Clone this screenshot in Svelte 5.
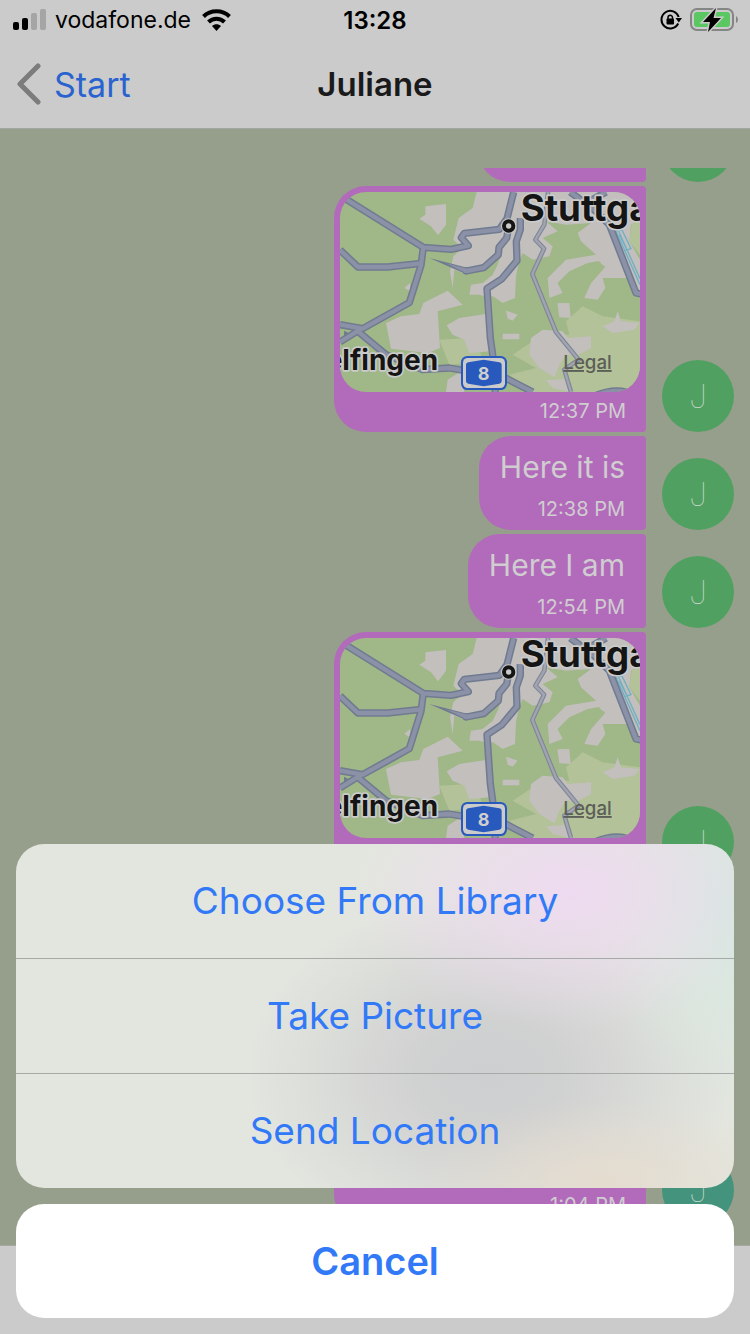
<script>
  const messages = [
    { kind: 'empty' },
    { kind: 'map', time: '12:37 PM' },
    { kind: 'text', text: 'Here it is', time: '12:38 PM' },
    { kind: 'text', text: 'Here I am', time: '12:54 PM' },
    { kind: 'map' },
    { kind: 'empty' },
    { kind: 'photo', time: '1:04 PM', teal: true }
  ];
  const actions = ['Choose From Library', 'Take Picture', 'Send Location'];
</script>

{#snippet map()}
  <svg class="map" viewBox="12 12 900 600">
    <rect x="12" y="12" width="900" height="600" fill="#a0b788" />
    <!-- light meadows -->
    <g fill="#b3c298">
      <path d="M740 355 L800 385 L912 400 V612 H640 L560 590 L520 560 L600 540 L530 500 L560 480 L620 440 L700 440 L690 400Z" />
      <path d="M890 90 L912 80 V200 L880 160Z" />
      <path d="M310 455 L400 450 L430 480 L440 520 L340 530Z" />
      <path d="M560 570 L640 590 L650 612 L560 612Z" />
    </g>
    <!-- built-up areas -->
    <g fill="#c2bfbd">
      <path d="M422 12 H912 V90 L885 110 L880 160 L912 215 V320 L890 270 L800 270 L808 300 L785 335 L745 330 L765 285 L805 240 L790 220 L755 225 L700 250 L665 285 L680 315 L640 330 L635 270 L690 215 L780 200 L735 160 L725 135 L765 105 L690 110 L630 100 L665 130 L620 150 L650 175 L640 205 L590 215 L560 195 L548 225 L540 265 L537 330 L500 345 L465 320 L480 325 L445 325 L430 320 L400 320 L405 290 L440 285 L470 260 L485 230 L498 190 L470 222 L440 248 L390 258 L355 245 L350 300 L342 250 L352 205 L380 180 L362 165 L352 155 L368 90 L410 60Z" />
      <path d="M268 55 L330 48 L330 110 L306 142 L285 115 L250 92 L268 80Z" />
      <path d="M150 405 L195 385 L250 378 L262 345 L335 308 L380 350 L305 370 L312 480 L275 495 L165 482Z" />
      <path d="M332 412 L370 390 L450 378 L462 490 L400 495 L385 455 L350 440Z" />
      <path d="M510 368 L545 380 L530 398 L515 392Z" />
      <path d="M500 437 H550 V454 H500Z" />
      <path d="M664 346 L700 345 L704 390 L670 388Z" />
      <path d="M585 450 L620 425 L680 430 L695 450 L765 445 L765 480 L720 505 L690 500 L670 530 L655 568 L610 540 L580 500Z" />
      <path d="M800 415 L835 400 L845 370 L855 400 L910 405 L895 425 L830 435Z" />
      <path d="M335 575 L375 550 L385 612 L330 612Z" />
      <path d="M630 577 L700 572 L702 612 L650 600Z" />
      <path d="M222 285 L205 300 L222 310Z" />
    </g>
    <g fill="#a0b788">
      <path d="M690 275 L730 240 L780 220 L808 235 L765 285 L745 310 L700 325Z" />
    </g>
    <!-- river -->
    <g fill="none" stroke="#6fb0c4" stroke-width="4">
      <path d="M838 125 L912 290 M846 125 L912 272 M840 128 L858 126 L885 182 L866 188 M850 140 L872 184" />
    </g>
    <!-- minor road -->
    <g fill="none" stroke-linejoin="round">
      <path d="M636 12 L625 110 L598 155 L624 182 L589 258 L660 432 L728 515 L685 545 L705 612" stroke="#7f8799" stroke-width="14" />
      <path d="M636 12 L625 110 L598 155 L624 182 L589 258 L660 432 L728 515 L685 545 L705 612" stroke="#a2a5b0" stroke-width="7" />
    </g>
    <!-- motorways: dark casing under a lighter core -->
    <path d="M280 210 L394 239 L389 258Z" fill="#707b90" />
    {#each [['#707b90', 22], ['#8b91a7', 13]] as [color, width]}
      <g fill="none" stroke={color} stroke-width={width} stroke-linejoin="round">
        <path d="M12 22 L262 178 L345 184 L397 173 L376 149 L385 136 L490 124 L513 92 L533 12" />
        <path d="M12 186 L66 237 L155 237 L256 226" />
        <path d="M262 178 L255 232 L220 344 L80 422 L12 410 M80 420 L12 462 M66 430 L150 500 L260 545 L340 540 L400 550 L470 550 L590 612" />
        <path d="M518 118 L512 150 L489 178 L487 200 L443 239 L391 249 L385 247" />
        <path d="M553 90 L553 125 L541 160 L543 218 L497 273 L453 302 L463 450 L470 500 L478 612" />
        <path d="M703 12 L780 70 L820 110 L900 315 L916 318" />
        <path d="M760 40 L810 12" />
        <path d="M780 622 Q830 602 870 612" />
      </g>
    {/each}
    <path d="M330 226 L393 242 L390 255Z" fill="#8b91a7" />
    <path d="M24 428 L40 436 L24 446Z" fill="#707b90" />
    <circle cx="518" cy="114" r="23" fill="#c9c9c9" />
    <circle cx="518" cy="114" r="14" fill="#c9c9c9" stroke="#151515" stroke-width="12" />
    <g class="place">
      <text x="554" y="98" font-size="110">Stuttgart</text>
      <text x="-31" y="546" font-size="84">elfingen</text>
    </g>
    <rect x="375" y="504" width="138" height="102" rx="19" fill="#2859bd" />
    <rect x="381" y="510" width="126" height="90" rx="14" fill="#cbcbcb" />
    <path d="M390 530 Q390 524 397 523 L443 515 L490 523 Q497 524 497 530 V580 Q497 586 490 587 L443 595 L397 587 Q390 586 390 580Z" fill="#2859bd" />
    <text class="shield" x="443" y="575">8</text>
    <text class="legal" x="682" y="543">Legal</text>
  </svg>
{/snippet}

<div class="screen">
  <header>
    <div class="status">
      <div class="carrier">
        <svg width="34" height="24" viewBox="0 0 34 24">
          <rect x="1" y="14" width="6" height="8" rx="2" />
          <rect x="10" y="10" width="6" height="12" rx="2" />
          <rect x="19" y="5" width="6" height="17" rx="2" fill="#a5a5a5" />
          <rect x="28" y="1" width="6" height="21" rx="2" fill="#a5a5a5" />
        </svg>
        <span>vodafone.de</span>
        <svg width="32" height="24" viewBox="-1 0 31 24" fill="none" stroke="#000" stroke-width="4">
          <path d="M2 8.500 C9 1.500 21 1.500 28 8.500" />
          <path d="M7 14 C11.500 9.500 18.500 9.500 23 14" />
          <path d="M10.500 18 C13 15.500 17 15.500 19.500 18 L15 23Z" fill="#000" stroke="none" />
        </svg>
      </div>
      <time>13:28</time>
      <div class="indicators">
        <svg width="22" height="22" viewBox="0 0 22 22">
          <path d="M18.200 14.500 A8.800 8.800 0 1 1 18.700 8" fill="none" stroke="#000" stroke-width="2" />
          <path d="M15.500 9 H22 L18.800 13.500Z" />
          <rect x="6.500" y="9.500" width="7.500" height="6" rx="1" />
          <path d="M8 10 V8.500 A2.200 2.200 0 0 1 12.500 8.500 V10" fill="none" stroke="#000" stroke-width="1.500" />
        </svg>
        <svg width="48" height="26" viewBox="0 0 48 26">
          <rect x="1" y="2" width="42" height="21" rx="6" fill="none" stroke="#858585" stroke-width="2" />
          <rect x="4" y="5" width="36" height="15" rx="3" fill="#5bc763" />
          <path d="M46 9 Q48 10 48 12.500 Q48 15 46 16Z" fill="#858585" />
          <path d="M26 1 L13 15 H20 L18 25 L31 11 H23.500Z" stroke="#cbcbcb" stroke-width="3" />
          <path d="M26 1 L13 15 H20 L18 25 L31 11 H23.500Z" />
        </svg>
      </div>
    </div>
    <nav>
      <button class="back">
        <svg width="26" height="42" viewBox="0 0 26 42" fill="none" stroke="#7c7c7c" stroke-width="5" stroke-linecap="round" stroke-linejoin="round">
          <path d="M22 3 L4 21 L22 39" />
        </svg>
        Start
      </button>
      <h1>Juliane</h1>
    </nav>
  </header>

  <main>
    {#each messages as m}
      <div class="row">
        <div class="bubble {m.kind}">
          {#if m.kind === 'map'}{@render map()}{/if}
          {#if m.kind === 'photo'}<div class="picture"></div>{/if}
          {#if m.text}<p>{m.text}</p>{/if}
          {#if m.time}<time>{m.time}</time>{/if}
        </div>
        <div class="avatar" class:teal={m.teal}>J</div>
      </div>
    {/each}
  </main>
  <footer></footer>

  <div class="sheet">
    <div class="actions">
      {#each actions as action}
        <button>{action}</button>
      {/each}
    </div>
    <button class="cancel">Cancel</button>
  </div>
</div>

<style>
  :global(body) {
    margin: 0;
  }
  .screen {
    position: relative;
    display: flex;
    flex-direction: column;
    height: 100vh;
    overflow: hidden;
    background: #969f8b;
    font-family: Inter, 'Liberation Sans', sans-serif;
  }
  svg {
    display: block;
    flex: none;
  }
  button {
    border: 0;
    padding: 0;
    background: none;
    font: inherit;
    cursor: pointer;
  }
  header {
    background: #cbcbcb;
    border-bottom: 1px solid #a2a6a0;
  }
  .status,
  nav {
    display: grid;
    grid-template-columns: 1fr auto 1fr;
    align-items: center;
  }
  .status {
    height: 40px;
    padding: 0 12px;
    font-size: 23px;
  }
  .status time {
    font-size: 24px;
    font-weight: 600;
  }
  .carrier {
    display: flex;
    align-items: center;
    gap: 9px;
  }
  .indicators {
    display: flex;
    align-items: center;
    justify-content: flex-end;
    gap: 8px;
  }
  nav {
    height: 88px;
    padding: 0 16px;
    font-size: 34px;
  }
  .back {
    display: flex;
    align-items: center;
    gap: 12px;
    color: #2863cf;
  }
  h1 {
    margin: 0;
    color: #1a1a1b;
    font-size: 33px;
    font-weight: 600;
  }
  main {
    flex: 1;
    min-height: 0;
    display: flex;
    flex-direction: column;
    justify-content: flex-end;
    gap: 4px;
    margin-top: 39px;
    padding: 0 16px 19px;
    overflow: hidden;
  }
  .row {
    flex: none;
    display: flex;
    align-items: flex-end;
    justify-content: flex-end;
    gap: 16px;
  }
  .bubble {
    box-sizing: border-box;
    display: flex;
    flex-direction: column;
    justify-content: space-between;
    min-height: 94px;
    padding: 11px 21px 9px;
    border-radius: 32px 4px 4px 32px;
    background: #b26abb;
    color: #d0cdd0;
    text-align: right;
  }
  .bubble.map,
  .bubble.photo {
    width: 312px;
    min-height: 246px;
    padding: 6px 6px 9px;
  }
  .map time,
  .photo time {
    padding-right: 14px;
  }
  .bubble.empty {
    width: 168px;
  }
  .bubble p {
    margin: 0;
    font-size: 30px;
    line-height: 40px;
  }
  .bubble time {
    font-size: 20px;
    line-height: 24px;
  }
  svg.map {
    width: 100%;
    border-radius: 26px;
  }
  .picture {
    height: 200px;
    border-radius: 26px;
    background: #7d8287;
  }
  .place {
    fill: #151515;
    stroke: #cbcbcb;
    stroke-width: 10px;
    stroke-linejoin: round;
    paint-order: stroke;
    font-weight: 700;
  }
  .shield {
    fill: #cfcfcf;
    font-size: 54px;
    font-weight: 700;
    text-anchor: middle;
  }
  .legal {
    fill: #5c5e58;
    font-size: 56px;
    font-weight: 500;
    text-decoration: underline;
  }
  .avatar {
    display: grid;
    place-items: center;
    width: 72px;
    height: 72px;
    border-radius: 50%;
    background: #50a161;
    color: #d0dad0;
    font-size: 32px;
    font-weight: 100;
  }
  .avatar.teal {
    background: #44947d;
  }
  footer {
    height: 88px;
    border-top: 1px solid #a5a8a3;
    background: #cbcbcb;
  }
  .sheet {
    position: absolute;
    right: 16px;
    bottom: 16px;
    left: 16px;
    display: flex;
    flex-direction: column;
    gap: 16px;
  }
  .sheet button {
    padding: 33px 16px;
    color: #3279f7;
    font-size: 37px;
    line-height: 48px;
  }
  .actions {
    display: flex;
    flex-direction: column;
    overflow: hidden;
    border-radius: 28px;
    background:
      radial-gradient(ellipse 30% 40% at 77% 14%, #eedaf0 0%, #eedaf000 100%),
      radial-gradient(ellipse 18% 60% at 100% 18%, #d5e8df 0%, #d5e8df00 100%),
      radial-gradient(ellipse 26% 24% at 82% 98%, #e5dccf 0%, #e5dccf00 100%),
      radial-gradient(ellipse 34% 52% at 66% 67%, #cdcfd0 0%, #d0d1d1 30%, #d0d1d100 100%),
      #e3e6df;
  }
  .actions button + button {
    border-top: 1px solid #a5aaa6;
  }
  .sheet .cancel {
    border-radius: 28px;
    background: #fff;
    font-size: 38px;
    font-weight: 600;
  }
</style>
